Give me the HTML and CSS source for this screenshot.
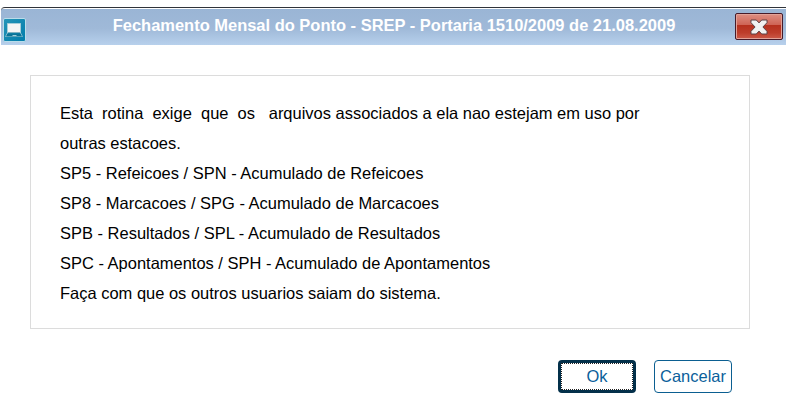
FILE: index.html
```
<!DOCTYPE html>
<html lang="pt-br">
<head>
  <meta charset="UTF-8">
  <title>Fechamento Mensal do Ponto</title>
  <link rel="stylesheet" href="styles.css">
</head>
<body>
  <div class="janela">
    <div class="titulo">
      <svg class="icone" width="24" height="24" viewBox="0 0 24 24">
        <defs>
          <linearGradient id="azul" x1="0" y1="0" x2="1" y2="1">
            <stop offset="0" stop-color="#2795b8"/>
            <stop offset="1" stop-color="#007cab"/>
          </linearGradient>
        </defs>
        <rect x=".5" y=".5" width="22" height="23" rx="1.5" fill="url(#azul)" stroke="#b9dce9"/>
        <rect x="4.5" y="5.5" width="13" height="9" fill="#f5f5f5" stroke="#7fb0c0"/>
        <path d="M4.5 15v-9.5h13v9.5l1.8 3.5h-16.6z" fill="none" stroke="#a5cdd9"/>
        <path d="M4.5 15.5h13l1.5 3h-16z" fill="#087296"/>
        <path d="M9.5 17.5h4" stroke="#9fd0df"/>
      </svg>
      <h1>Fechamento Mensal do Ponto - SREP - Portaria 1510/2009 de 21.08.2009</h1>
      <button class="fechar" aria-label="Fechar">
        <svg width="18" height="16" viewBox="0 0 18 16">
          <path d="M1 1h5.3L9 3.9 11.700 1H17v2.700L12.900 8l4.100 4.300V15h-5.300L9 12.100 6.300 15H1v-2.700L5.100 8 1 3.700z" fill="#f1f1f1" stroke="#5c4145"/>
        </svg>
      </button>
    </div>
    <div class="mensagem">
      <p>Esta  rotina  exige  que  os   arquivos associados a ela nao estejam em uso por</p>
      <p>outras estacoes.</p>
      <p>SP5 - Refeicoes / SPN - Acumulado de Refeicoes</p>
      <p>SP8 - Marcacoes / SPG - Acumulado de Marcacoes</p>
      <p>SPB - Resultados / SPL - Acumulado de Resultados</p>
      <p>SPC - Apontamentos / SPH - Acumulado de Apontamentos</p>
      <p>Faça com que os outros usuarios saiam do sistema.</p>
    </div>
    <div class="botoes">
      <button class="botao ok"><span>Ok</span></button>
      <button class="botao">Cancelar</button>
    </div>
  </div>
</body>
</html>
```
FILE: styles.css
```
* {
  box-sizing: border-box;
}
body {
  margin: 0;
  background: #fff;
  color: #000;
  font-family: "Liberation Sans", Arial, sans-serif;
  font-size: 16.48px;
}
.janela {
  padding-top: 7px;
}
.titulo {
  display: flex;
  height: 38px;
  margin-left: 1px;
  padding: 0 3px 0 2px;
  border-top: 1px solid #30343a;
  border-radius: 4px 0 0 0;
  background: linear-gradient(#fff 1px, #9ab5d5 1px, #9fb9d8 55%, #b7d0ec);
}
.icone {
  flex: none;
  margin-top: 10px;
}
h1 {
  flex: 1;
  margin: 0;
  padding-left: 26px;
  text-align: center;
  font-size: 16.48px;
  line-height: 35px;
  color: #fff;
  white-space: nowrap;
}
.fechar {
  display: flex;
  align-items: center;
  justify-content: center;
  width: 48px;
  height: 27px;
  margin-top: 5px;
  padding: 0;
  border: 1px solid #471b29;
  border-radius: 2px;
  box-shadow: inset 0 0 0 1px #e2a298;
  background: linear-gradient(#dd8f83, #cf6557 42%, #b52f1d 43%, #bd3d2b 75%, #cc5a49);
}
.fechar svg {
  flex: none;
}
.mensagem {
  width: 720px;
  height: 254px;
  margin: 30px 0 0 30px;
  padding: 22px 29px;
  border: 1px solid #dcdcdc;
}
.mensagem p {
  margin: 0;
  line-height: 30px;
  white-space: pre;
}
.botoes {
  display: flex;
  gap: 18px;
  margin: 31px 0 0 558px;
}
.botao {
  width: 78px;
  height: 33px;
  padding: 0;
  border: 1px solid #0b5f91;
  border-radius: 4px;
  background: #fff;
  color: #0b5f9b;
  font-family: inherit;
  font-size: 16.48px;
}
.ok {
  border: 3px solid #03304a;
}
.ok span {
  display: block;
  height: 27px;
  line-height: 25px;
  border: 1px dotted #222;
}
```
